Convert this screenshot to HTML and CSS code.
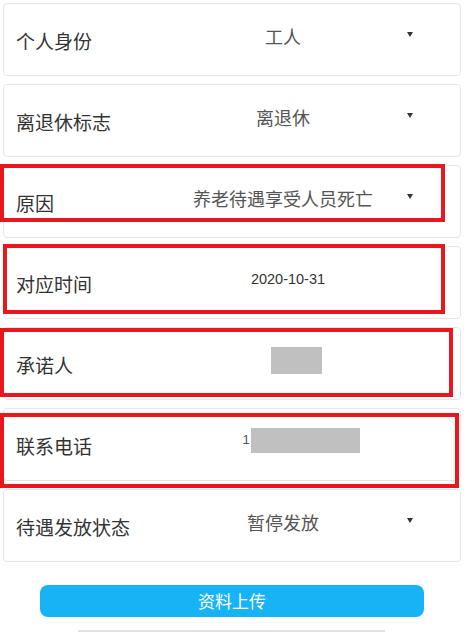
FILE: index.html
```html
<!DOCTYPE html>
<html lang="zh-CN">
<head>
  <meta charset="UTF-8" />
  <meta name="viewport" content="width=device-width, initial-scale=1.0" />
  <title>资料上传</title>
  <link rel="stylesheet" href="styles.css">
</head>
<body>
  <div class="form">
    <div class="field">
      <span class="label">个人身份</span>
      <span class="value">工人</span>
      <span class="arrow"><i class="caret"></i></span>
    </div>

    <div class="field">
      <span class="label">离退休标志</span>
      <span class="value">离退休</span>
      <span class="arrow"><i class="caret"></i></span>
    </div>

    <div class="field">
      <span class="label">原因</span>
      <span class="value">养老待遇享受人员死亡</span>
      <span class="arrow"><i class="caret"></i></span>
      <div class="mark mark-reason"></div>
    </div>

    <div class="field">
      <span class="label">对应时间</span>
      <span class="value date">2020-10-31</span>
      <span class="arrow"></span>
      <div class="mark mark-date"></div>
    </div>

    <div class="field">
      <span class="label">承诺人</span>
      <span class="value"><span class="redact redact-name"></span></span>
      <span class="arrow"></span>
      <div class="mark mark-name"></div>
    </div>

    <div class="field">
      <span class="label">联系电话</span>
      <span class="value phone">1<span class="redact redact-phone"></span></span>
      <span class="arrow"></span>
      <div class="mark mark-phone"></div>
    </div>

    <div class="field">
      <span class="label">待遇发放状态</span>
      <span class="value">暂停发放</span>
      <span class="arrow"><i class="caret"></i></span>
    </div>
  </div>

  <div class="actions">
    <button type="button" class="upload">资料上传</button>
  </div>
  <div class="bottom-bar"></div>
</body>
</html>
```

FILE: styles.css
```css
body {
  margin: 0;
  padding: 3px 6px 0 3px;
  background: #fff;
  font-family: "Noto Sans CJK SC", "Noto Sans", sans-serif;
  color: #333;
}
.field {
  position: relative;
  box-sizing: border-box;
  height: 73px;
  margin-bottom: 8px;
  padding-left: 12px;
  background: #fff;
  border: 1px solid #e6e6e6;
  border-radius: 4px;
  display: grid;
  grid-template-columns: 146px 1fr 56px;
  align-items: center;
}
.label {
  font-size: 19px;
  color: #333;
  margin-top: 2px;
  white-space: nowrap;
}
.value {
  font-size: 18px;
  color: #555;
  text-align: center;
  margin-bottom: 8px;
  white-space: nowrap;
}
.value.date {
  font-family: "Liberation Sans", Arial, sans-serif;
  font-size: 14.5px;
  color: #333;
  padding-left: 10px;
}
.value.phone {
  font-family: "Liberation Sans", Arial, sans-serif;
  font-size: 13px;
  color: #555;
  padding-left: 36px;
}
.redact {
  display: inline-block;
  background: #c0c0c0;
  vertical-align: middle;
}
.redact-name {
  width: 51px;
  height: 27px;
  margin-left: 26px;
}
.redact-phone {
  width: 109px;
  height: 25px;
  margin-left: 1px;
}
.arrow {
  padding-left: 3px;
  margin-bottom: 13px;
  line-height: 0;
}
.caret {
  display: inline-block;
  width: 0;
  height: 0;
  border-left: 3px solid transparent;
  border-right: 3px solid transparent;
  border-top: 5px solid #333;
}
.mark {
  position: absolute;
  box-sizing: border-box;
  border: 4px solid #e8161d;
  pointer-events: none;
}
.mark-reason {
  left: -4px;
  top: -2px;
  width: 445px;
  height: 58px;
}
.mark-date {
  left: -1px;
  top: -3px;
  width: 442px;
  height: 70px;
}
.mark-name {
  left: -4px;
  top: 0;
  width: 453px;
  height: 69px;
}
.mark-phone {
  left: -4px;
  top: 4px;
  width: 459px;
  height: 75px;
}
.actions {
  padding: 15px 0 0 37px;
}
.upload {
  display: block;
  width: 384px;
  height: 32px;
  border: none;
  border-radius: 8px;
  background: #18b3f4;
  color: #fff;
  font-family: "Noto Sans CJK SC", sans-serif;
  font-size: 17px;
  line-height: 32px;
  padding: 0;
}
.bottom-bar {
  margin: 13px 0 0 75px;
  width: 307px;
  height: 2px;
  background: #e2e2e2;
}
```
